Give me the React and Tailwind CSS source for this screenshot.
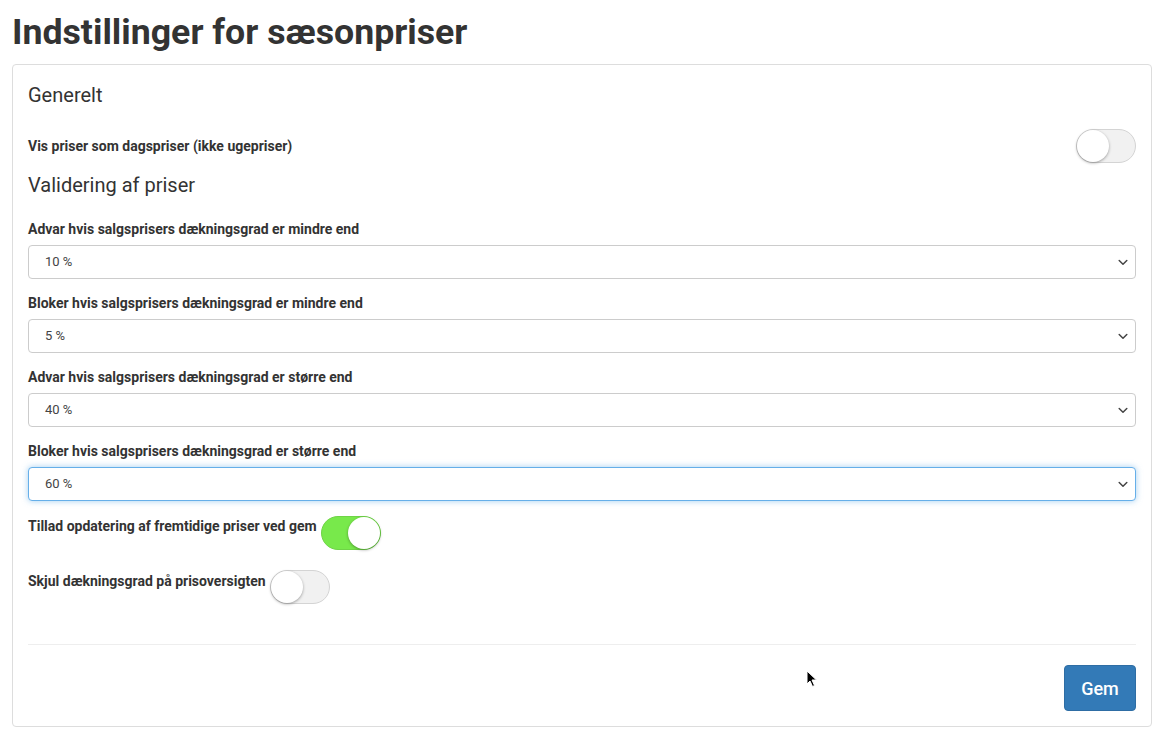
import React from "react";

function Toggle({ on }) {
  return (
    <div
      className={
        "relative h-[34px] w-[60px] shrink-0 rounded-full border " +
        (on ? "bg-[#78e94b] border-[#6fd447]" : "bg-[#f1f1f1] border-[#d4d4d4]")
      }
    >
      <div
        className={
          "absolute top-[0px] h-[32px] w-[32px] rounded-full bg-white shadow-[0_1px_3px_rgba(0,0,0,0.35)] " +
          (on ? "right-[0px]" : "left-[0px]")
        }
      />
    </div>
  );
}

function Chevron() {
  return (
    <svg width="10" height="7" viewBox="0 0 10 7" className="shrink-0">
      <path d="M1.2 1.5 L5 5.2 L8.8 1.5" fill="none" stroke="#444" strokeWidth="1.5" strokeLinecap="round" strokeLinejoin="round" />
    </svg>
  );
}

function SelectField({ label, value, focused, last }) {
  return (
    <div className={last ? "" : "mb-[15px]"}>
      <div className="mb-[7px] text-[14px] font-bold leading-[18px] text-[#333]">{label}</div>
      <div
        className={
          "flex h-[34px] items-center justify-between rounded-[4px] border bg-white pl-[16px] pr-[7px] text-[13px] text-[#444] " +
          (focused
            ? "border-[#66afe9] shadow-[0_0_6px_rgba(102,175,233,0.6)]"
            : "border-[#cccccc]")
        }
      >
        <span>{value}</span>
        <Chevron />
      </div>
    </div>
  );
}

export default function App() {
  return (
    <div className="relative min-h-[731px] bg-white font-['Roboto',_'Liberation_Sans',_sans-serif] text-[#333]">
      <h1 className="px-3 pt-[12px] text-[35.7px] font-bold leading-[40px] text-[#333] mb-[12px]">
        Indstillinger for sæsonpriser
      </h1>
      <div className="ml-[12px] mr-[10px] rounded-[4px] border border-[#dddddd] px-[15px] pt-[19px] pb-[15px]">
        <h3 className="text-[20px] leading-[22px] text-[#333]">Generelt</h3>
        <div className="mt-[23px] flex items-center justify-between">
          <div className="text-[14px] font-bold leading-[18px]">Vis priser som dagspriser (ikke ugepriser)</div>
          <Toggle on={false} />
        </div>
        <h3 className="mt-[11px] text-[20px] leading-[22px] text-[#333]">Validering af priser</h3>
        <div className="mt-[24px]">
          <SelectField label="Advar hvis salgsprisers dækningsgrad er mindre end" value="10 %" />
          <SelectField label="Bloker hvis salgsprisers dækningsgrad er mindre end" value="5 %" />
          <SelectField label="Advar hvis salgsprisers dækningsgrad er større end" value="40 %" />
          <SelectField label="Bloker hvis salgsprisers dækningsgrad er større end" value="60 %" focused last />
        </div>
        <div className="mt-[15px] flex items-start gap-[4px]">
          <div className="pt-[1px] text-[14px] font-bold leading-[18px]">Tillad opdatering af fremtidige priser ved gem</div>
          <Toggle on={true} />
        </div>
        <div className="mt-[20px] flex items-start gap-[4px]">
          <div className="pt-[2px] text-[14px] font-bold leading-[18px]">Skjul dækningsgrad på prisoversigten</div>
          <Toggle on={false} />
        </div>
        <div className="mt-[40px] border-t border-[#eeeeee]" />
        <div className="mt-[20px] flex justify-end">
          <button className="h-[46px] w-[72px] rounded-[4px] border border-[#2e6da4] bg-[#337ab7] text-[18px] font-medium text-white">
            Gem
          </button>
        </div>
      </div>
      <svg
        className="absolute left-[806px] top-[670px]"
        width="12"
        height="18"
        viewBox="0 0 12 18"
      >
        <path d="M1 1 L1 14 L4 11 L6.5 16.5 L8.5 15.5 L6 10 L10.5 10 Z" fill="#000" stroke="#fff" strokeWidth="1" />
      </svg>
    </div>
  );
}
